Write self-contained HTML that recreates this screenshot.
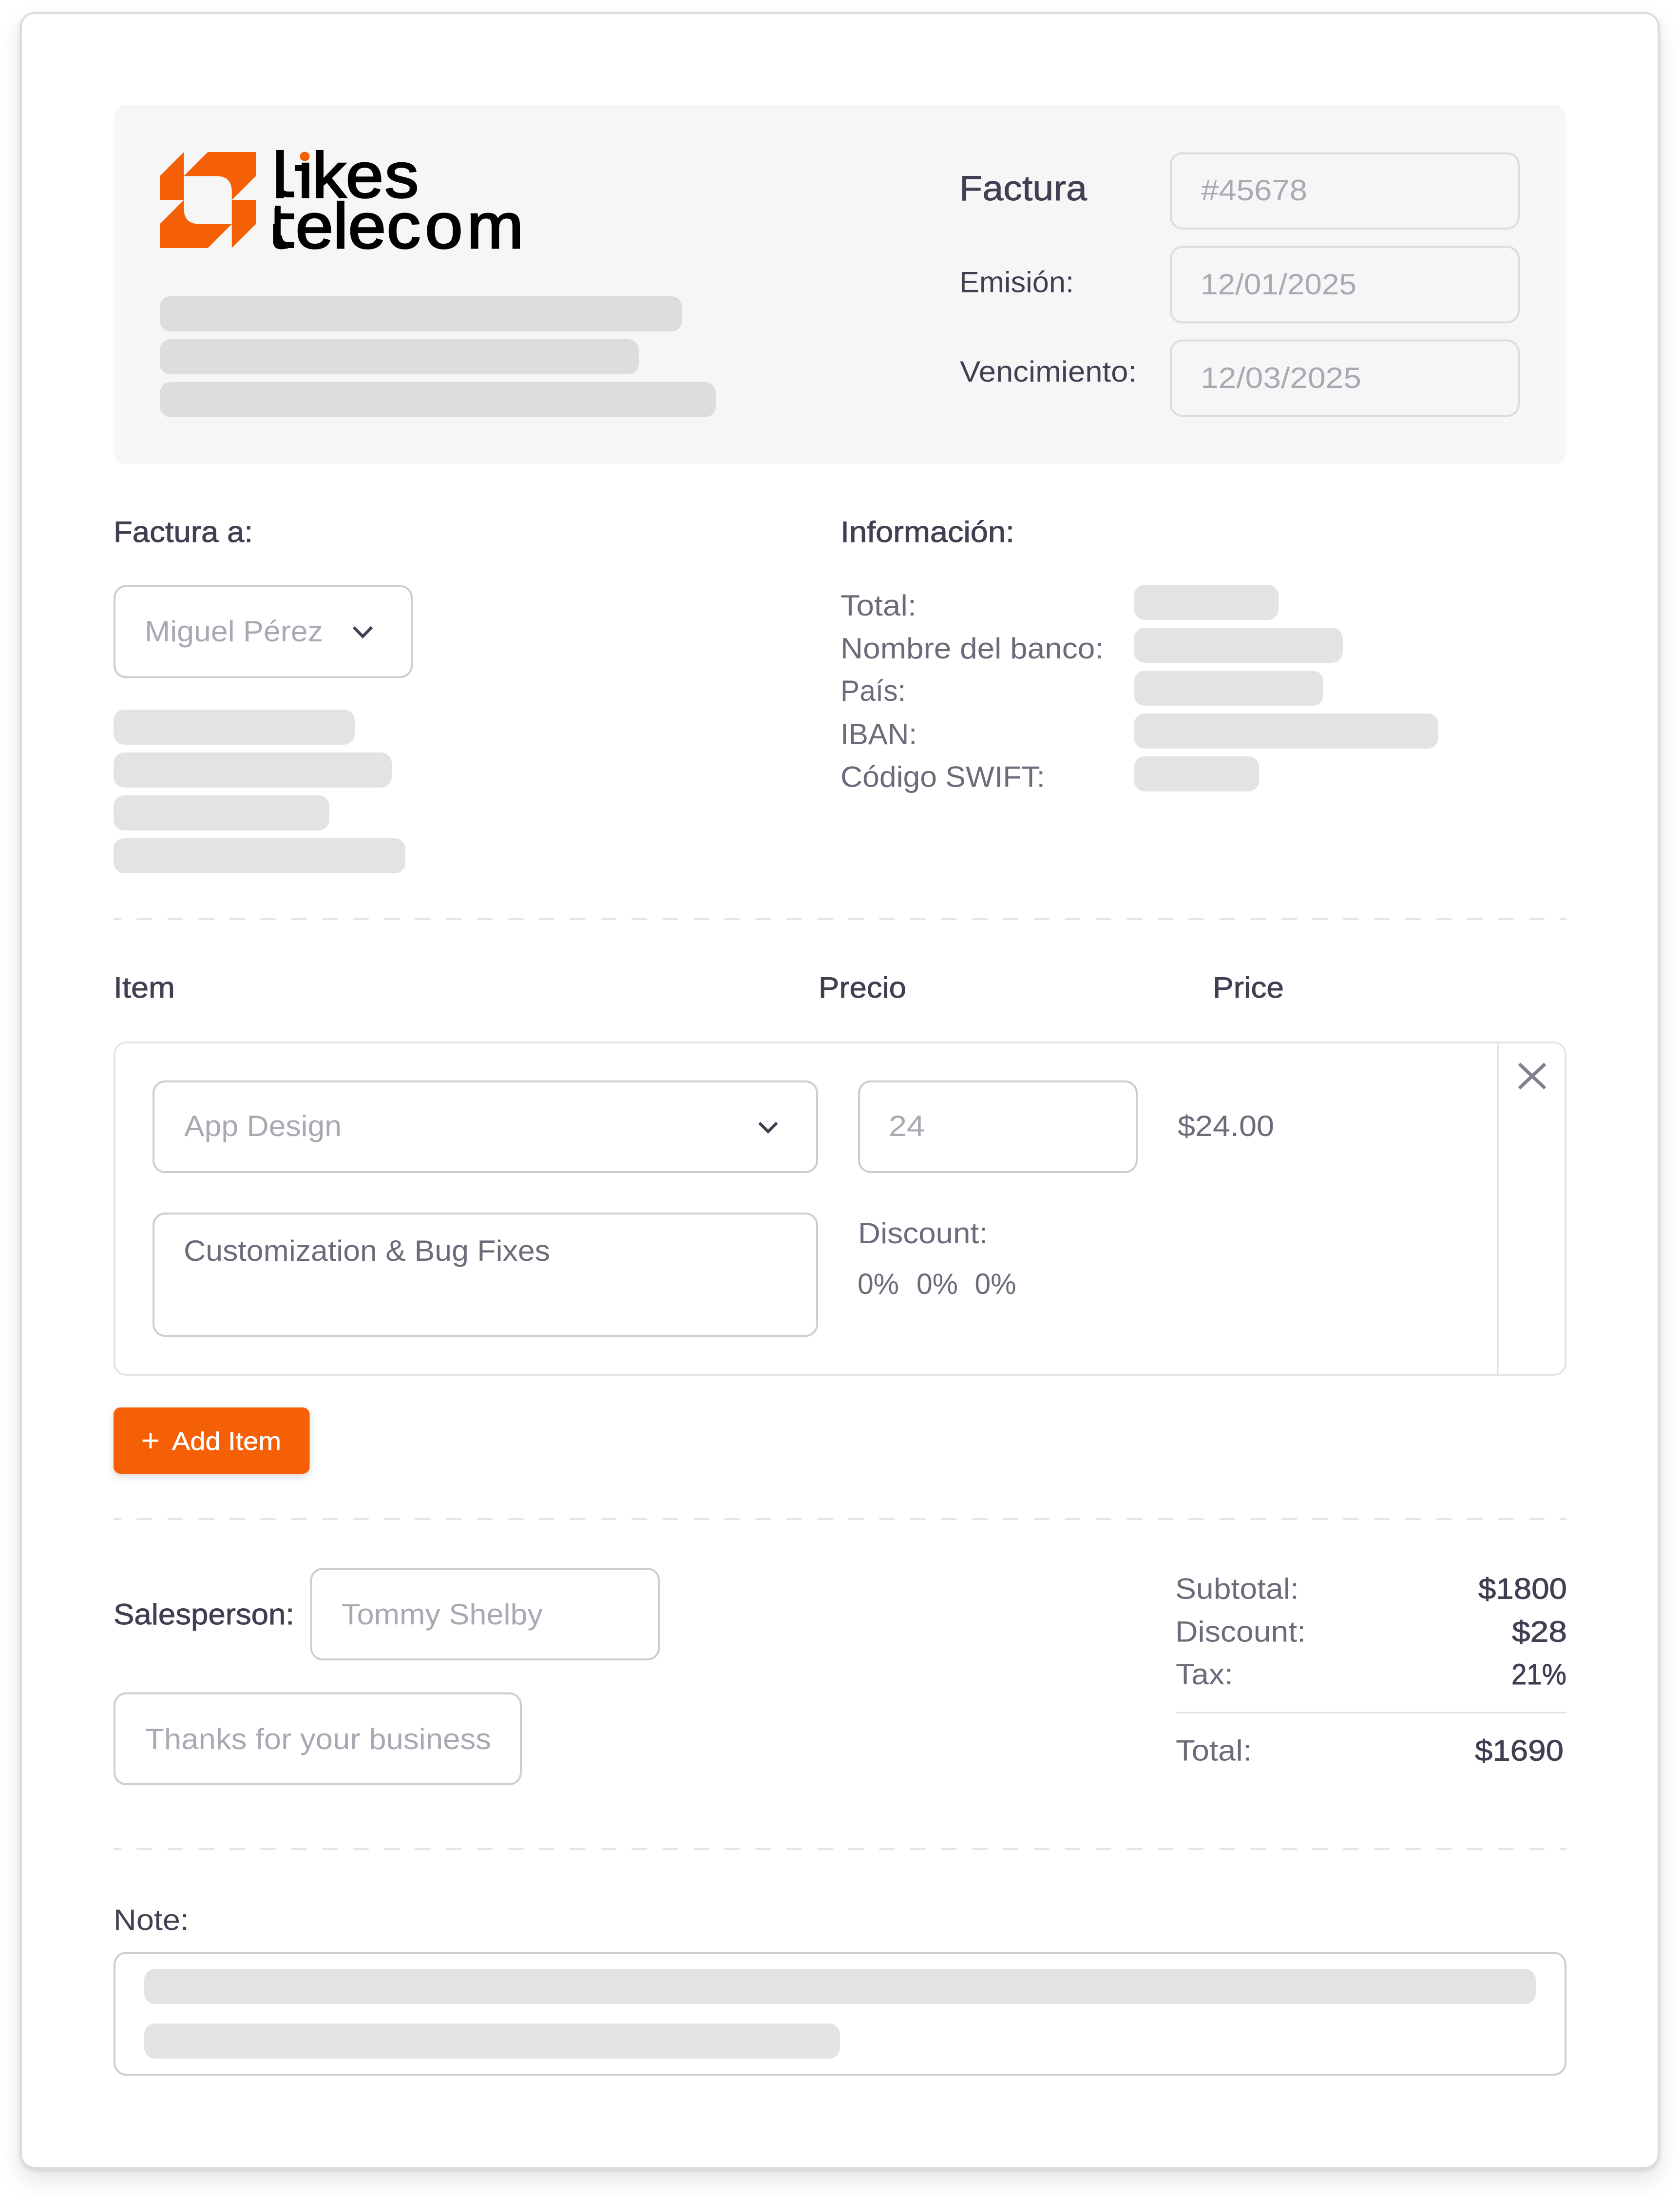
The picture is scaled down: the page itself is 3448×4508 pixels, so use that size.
<!DOCTYPE html>
<html lang="es"><head><meta charset="utf-8"><title>Factura</title>
<style>
html,body{margin:0;padding:0;background:#fff;width:3448px;height:4508px;overflow:hidden}
#card{position:absolute;left:41px;top:25px;width:3365px;height:4425px;box-sizing:border-box;background:#fff;border:4px solid #dcdcde;border-radius:30px;box-shadow:0 22px 44px rgba(40,40,60,.13),0 3px 8px rgba(40,40,60,.14)}
svg{position:absolute;left:0;top:0}
text{font-family:"Liberation Sans",Arial,sans-serif;font-size:60px}
.d{fill:#433e52}.m{stroke:#433e52;stroke-width:.9px}
.g{fill:#6c6b7a}.p{fill:#a9a9b3}
.b{fill:#e2e3e5}.h{fill:#dddddd}
.i{fill:#fff;stroke:#cdcdd2;stroke-width:4px}
.f{fill:#f6f6f6;stroke:#dcdcde;stroke-width:4px}
.dash{stroke:#e4e5e7;stroke-width:4px;stroke-dasharray:31.75 31.75;stroke-dashoffset:16px;fill:none}
.lg{font-size:132px;fill:#000;stroke:#000;stroke-width:3px}
</style></head><body>
<div id="card"></div>
<svg width="3448" height="4508" viewBox="0 0 3448 4508" xmlns="http://www.w3.org/2000/svg">
<rect x="233" y="216" width="2982" height="736" rx="24" fill="#f6f6f6"/>
<g fill="#f55f05">
<path d="M328 361.250L377.250 312V410.500H328Z"/>
<path d="M377.250 361.250L426.500 312H525V361.250L475.750 410.500V393.250Q475.750 361.250 443.750 361.250Z"/>
<path d="M328 459.750L377.250 410.500V427.750Q377.250 459.750 409.250 459.750H475.750L426.500 509H328Z"/>
<path d="M475.750 410.500H525V459.750L475.750 509Z"/>
</g>
<g transform="translate(564,405) scale(1.06,1)"><text class="lg" x="-4.500 41.1 72.3 137.2 212.700" y="0">lıkes</text></g>
<path d="M569 375Q569 405 592 405H604V393H592Q579 393 579 380Z"/><rect x="606" y="339" width="20" height="12"/>
<ellipse cx="625.5" cy="321" rx="10" ry="9.500" fill="#f55f05"/>
<g transform="translate(564,509) scale(1.06,1)"><text class="lg" x="-11.9 40 112.800 141.900 216.400 290.600 371.800" y="0">telecom</text></g>
<rect x="546" y="425" width="17.500" height="34" fill="#f6f6f6"/>
<rect x="575" y="438" width="29" height="12"/>
<path d="M569 480Q569 509 592 509H604V497H592Q579 497 579 484Z"/>

<rect class="h" x="328" y="608" width="1072" height="72" rx="22"/>
<rect class="h" x="328" y="696" width="983" height="72" rx="22"/>
<rect class="h" x="328" y="784" width="1141" height="72" rx="22"/>

<text class="d m" x="1969" y="411" style="font-size:72px" textLength="262" lengthAdjust="spacingAndGlyphs">Factura</text>
<text class="d" x="1969" y="599.500" textLength="235" lengthAdjust="spacingAndGlyphs">Emisión:</text>
<text class="d" x="1970" y="783" textLength="363" lengthAdjust="spacingAndGlyphs">Vencimiento:</text>
<rect class="f" x="2403" y="314.500" width="714" height="154.500" rx="24"/>
<rect class="f" x="2403" y="506.500" width="714" height="155" rx="24"/>
<rect class="f" x="2403" y="698.500" width="714" height="155" rx="24"/>
<text class="p" x="2465" y="411" textLength="218" lengthAdjust="spacingAndGlyphs">#45678</text>
<text class="p" x="2464" y="604" textLength="320" lengthAdjust="spacingAndGlyphs">12/01/2025</text>
<text class="p" x="2464" y="796" textLength="330" lengthAdjust="spacingAndGlyphs">12/03/2025</text>

<text class="d m" x="233" y="1112" textLength="286" lengthAdjust="spacingAndGlyphs">Factura a:</text>
<rect class="i" x="235" y="1202.500" width="610" height="187" rx="24"/>
<text class="p" x="297" y="1316" textLength="366" lengthAdjust="spacingAndGlyphs">Miguel Pérez</text>
<path d="M726 1287L744.500 1306L763 1287" fill="none" stroke="#433e52" stroke-width="6"/>
<rect class="b" x="233" y="1456" width="495" height="72" rx="22"/>
<rect class="b" x="233" y="1544" width="571" height="72" rx="22"/>
<rect class="b" x="233" y="1632" width="443" height="72" rx="22"/>
<rect class="b" x="233" y="1720" width="599" height="72" rx="22"/>

<text class="d m" x="1725" y="1112" textLength="357" lengthAdjust="spacingAndGlyphs">Información:</text>
<text class="g" x="1725" y="1263" textLength="156" lengthAdjust="spacingAndGlyphs">Total:</text>
<text class="g" x="1725" y="1351" textLength="540" lengthAdjust="spacingAndGlyphs">Nombre del banco:</text>
<text class="g" x="1725" y="1438" textLength="134" lengthAdjust="spacingAndGlyphs">País:</text>
<text class="g" x="1725" y="1527" textLength="157" lengthAdjust="spacingAndGlyphs">IBAN:</text>
<text class="g" x="1725" y="1614.500" textLength="420" lengthAdjust="spacingAndGlyphs">Código SWIFT:</text>
<rect class="b" x="2327.500" y="1200" width="297" height="72" rx="22"/>
<rect class="b" x="2327.500" y="1288" width="428.500" height="72" rx="22"/>
<rect class="b" x="2327.500" y="1376" width="388.500" height="72" rx="22"/>
<rect class="b" x="2327.500" y="1464" width="624.500" height="72" rx="22"/>
<rect class="b" x="2327.500" y="1552" width="256.500" height="72" rx="22"/>

<line class="dash" x1="233" y1="1886" x2="3216" y2="1886"/>

<text class="d m" x="233" y="2047" textLength="126" lengthAdjust="spacingAndGlyphs">Item</text>
<text class="d m" x="1680" y="2047" textLength="180" lengthAdjust="spacingAndGlyphs">Precio</text>
<text class="d m" x="2489" y="2047" textLength="146" lengthAdjust="spacingAndGlyphs">Price</text>

<rect x="235" y="2139" width="2978" height="682" rx="24" fill="#fff" stroke="#e4e5e7" stroke-width="4"/>
<line x1="3074" y1="2137" x2="3074" y2="2822" stroke="#dedfe2" stroke-width="3"/>
<rect class="i" x="315" y="2219" width="1362" height="186" rx="24"/>
<text class="p" x="378" y="2331" textLength="323" lengthAdjust="spacingAndGlyphs">App Design</text>
<path d="M1558.500 2304L1576.500 2322L1594.500 2304" fill="none" stroke="#433e52" stroke-width="6"/>
<rect class="i" x="1763" y="2219" width="570" height="186" rx="24"/>
<text class="p" x="1824" y="2331" textLength="74" lengthAdjust="spacingAndGlyphs">24</text>
<text class="g" x="2417" y="2331" textLength="198" lengthAdjust="spacingAndGlyphs">$24.00</text>
<rect class="i" x="315" y="2490" width="1362" height="251" rx="24"/>
<text class="g" x="377" y="2587" textLength="752" lengthAdjust="spacingAndGlyphs">Customization &amp; Bug Fixes</text>
<text class="g" x="1761" y="2551" textLength="266" lengthAdjust="spacingAndGlyphs">Discount:</text>
<text class="g" x="1760" y="2655" textLength="85" lengthAdjust="spacingAndGlyphs">0%</text>
<text class="g" x="1881" y="2655" textLength="85" lengthAdjust="spacingAndGlyphs">0%</text>
<text class="g" x="2000.500" y="2655" textLength="85" lengthAdjust="spacingAndGlyphs">0%</text>
<path d="M3118 2183L3171 2233M3171 2183L3118 2233" fill="none" stroke="#80808a" stroke-width="7"/>

<rect x="233" y="2888" width="402.500" height="136" rx="14" fill="#f55f05" style="filter:drop-shadow(0 6px 8px rgba(60,40,30,.18))"/>
<path d="M309 2940V2972M292.500 2956H325" fill="none" stroke="#fff" stroke-width="4.500"/>
<text x="353" y="2975" fill="#fff" stroke="#fff" stroke-width=".7" style="font-size:52px" textLength="224" lengthAdjust="spacingAndGlyphs">Add Item</text>

<line class="dash" x1="233" y1="3117" x2="3216" y2="3117"/>

<text class="d m" x="233" y="3333" textLength="371" lengthAdjust="spacingAndGlyphs">Salesperson:</text>
<rect class="i" x="638.500" y="3219" width="714" height="186" rx="24"/>
<text class="p" x="701" y="3333" textLength="413" lengthAdjust="spacingAndGlyphs">Tommy Shelby</text>
<rect class="i" x="235" y="3474.500" width="834" height="186.500" rx="24"/>
<text class="p" x="298" y="3589" textLength="710" lengthAdjust="spacingAndGlyphs">Thanks for your business</text>

<text class="g" x="2412" y="3280.500" textLength="254" lengthAdjust="spacingAndGlyphs">Subtotal:</text>
<text class="g" x="2412" y="3368.500" textLength="268" lengthAdjust="spacingAndGlyphs">Discount:</text>
<text class="g" x="2413" y="3456" textLength="118" lengthAdjust="spacingAndGlyphs">Tax:</text>
<line x1="2413" y1="3514" x2="3216" y2="3514" stroke="#e0e1e3" stroke-width="3"/>
<text class="g" x="2413" y="3612.700" textLength="156" lengthAdjust="spacingAndGlyphs">Total:</text>
<text class="d m" x="3034" y="3280.500" textLength="182" lengthAdjust="spacingAndGlyphs">$1800</text>
<text class="d m" x="3103" y="3368.500" textLength="113" lengthAdjust="spacingAndGlyphs">$28</text>
<text class="d m" x="3102" y="3456" textLength="113" lengthAdjust="spacingAndGlyphs">21%</text>
<text class="d m" x="3027" y="3612.700" textLength="182" lengthAdjust="spacingAndGlyphs">$1690</text>

<line class="dash" x1="233" y1="3794" x2="3216" y2="3794"/>

<text class="d" x="233" y="3960" textLength="155" lengthAdjust="spacingAndGlyphs">Note:</text>
<rect class="i" x="235" y="4007" width="2978" height="250" rx="24"/>
<rect class="b" x="296" y="4040" width="2856" height="72" rx="22"/>
<rect class="b" x="296" y="4152" width="1428" height="72" rx="22"/>
</svg>
</body></html>
